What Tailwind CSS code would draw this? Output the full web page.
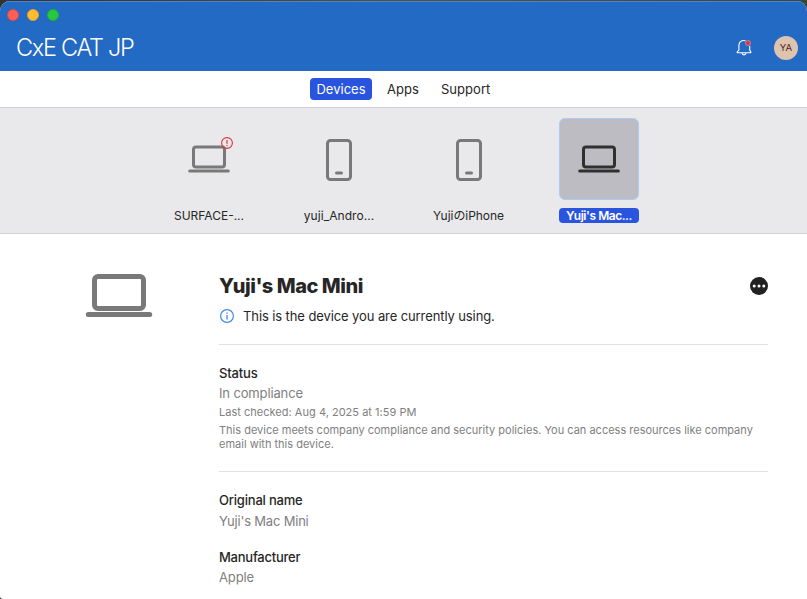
<!DOCTYPE html>
<html lang="en">
<head>
<meta charset="utf-8">
<title>CxE CAT JP</title>
<script src="https://cdn.jsdelivr.net/npm/@tailwindcss/browser@4"></script>
</head>
<body class="h-[599px] w-[807px] overflow-hidden bg-gradient-to-r from-[#34342f] via-[#55513f] to-[#39483f] pt-px font-['Inter','Noto_Sans_CJK_JP',sans-serif] text-[13px] text-[#262626]">
<div class="flex h-[598px] flex-col overflow-hidden rounded-t-[10px] rounded-bl-[3px] bg-white">
  <header class="flex h-[70px] shrink-0 flex-col border-t border-[#4b83cd] bg-[#236ac4]">
    <div class="flex gap-2 pt-[7px] pl-[7px]">
      <span class="size-3 rounded-full border border-[#e2463f] bg-[#ff5f57]"></span>
      <span class="size-3 rounded-full border border-[#e0a02c] bg-[#febc2e]"></span>
      <span class="size-3 rounded-full border border-[#1fae35] bg-[#28c840]"></span>
    </div>
    <div class="mt-[3px] flex h-12 items-center pr-[9px] pl-4">
      <h1 class="flex-1 text-[23.5px] leading-7 font-light tracking-[-1.3px] text-white">CxE CAT JP</h1>
      <svg class="mr-[21px] h-[18px] w-[18px]" viewBox="0 0 18 18" fill="none" stroke="#fff" stroke-width="1.1">
        <path d="M10.5 1.700C6.500 .7 3.900 3 3.900 6.300v4.700L2.200 13q-.3.800.5.800h12.600q.8 0 .5-.8L14.700 11V7"/>
        <path d="M7 14c.3 2.500 3.700 2.500 4 0"/>
        <circle cx="13" cy="4" r="2.500" fill="#e0313a" stroke="#e9a3b3" stroke-width=".6"/>
      </svg>
      <div class="mt-px flex size-6 items-center justify-center rounded-full bg-[#dec3b0] text-[9.5px] font-normal tracking-[0.2px] text-[#4a2a1c]">YA</div>
    </div>
  </header>

  <nav class="flex h-[37px] shrink-0 items-center border-b border-[#d1d1d1] pl-[310px] leading-4 tracking-[0.03px]">
    <a class="flex h-[22px] w-[62px] items-center justify-center rounded-[4px] bg-[#2955de] text-white">Devices</a>
    <a class="ml-[15px] w-[54px]">Apps</a>
    <a>Support</a>
  </nav>

  <section class="flex h-[126px] shrink-0 gap-[50px] border-b border-[#d1d1d1] bg-[#e9e9eb] pt-[10px] pl-[169px] text-[12px] leading-[15px]">
    <div class="flex w-20 flex-col items-center gap-2">
      <div class="relative flex h-[82px] w-20 items-center justify-center">
        <svg class="h-[30px] w-[42px]" viewBox="0 0 42 30" fill="none" stroke="#797979" stroke-width="3" stroke-linecap="round"><rect x="5.500" y="3" width="31" height="20" rx="2.500"/><path d="M1.700 27h38.600"/></svg>
        <svg class="absolute top-[19px] left-[52px] size-3" viewBox="0 0 12 12" fill="none" stroke="#d9333f"><circle cx="6" cy="6" r="5.400" stroke-width="1.100"/><path d="M6 3v3.800M6 8v1.200" stroke-width="1.200"/></svg>
      </div>
      <span class="whitespace-nowrap">SURFACE-...</span>
    </div>
    <div class="flex w-20 flex-col items-center gap-2">
      <div class="flex h-[82px] w-20 items-center justify-center pt-[2px]">
        <svg class="h-[42px] w-[26px]" viewBox="0 0 26 42" fill="none" stroke="#797979" stroke-width="3" stroke-linecap="round"><rect x="1.500" y="1.500" width="23" height="39" rx="3"/><path d="M10.500 34h5"/></svg>
      </div>
      <span class="whitespace-nowrap tracking-[0.05px]">yuji_Andro...</span>
    </div>
    <div class="flex w-20 flex-col items-center gap-2">
      <div class="flex h-[82px] w-20 items-center justify-center pt-[2px]">
        <svg class="h-[42px] w-[26px]" viewBox="0 0 26 42" fill="none" stroke="#797979" stroke-width="3" stroke-linecap="round"><rect x="1.500" y="1.500" width="23" height="39" rx="3"/><path d="M10.500 34h5"/></svg>
      </div>
      <span class="mr-px h-[15px] whitespace-nowrap tracking-[-0.05px]">YujiのiPhone</span>
    </div>
    <div class="flex w-20 flex-col items-center gap-2">
      <div class="flex h-[82px] w-20 items-center justify-center rounded-[6px] border border-[#adcbf7] bg-[#bdbcc2]">
        <svg class="h-[30px] w-[42px] shrink-0" viewBox="0 0 42 30" fill="none" stroke="#303030" stroke-width="3" stroke-linecap="round"><rect x="5.500" y="3" width="31" height="20" rx="2.500"/><path d="M1.700 27h38.600"/></svg>
      </div>
      <span class="h-[15px] w-20 rounded-[4px] bg-[#2955de] text-center font-semibold tracking-[-0.45px] whitespace-nowrap text-white">Yuji's Mac...</span>
    </div>
  </section>

  <main class="flex flex-1 pr-[39px] pl-[85px]">
    <div class="w-[134px] shrink-0 pt-[39px]">
      <svg class="h-[46px] w-[68px]" viewBox="0 0 68 46" fill="none" stroke="#797979" stroke-width="5" stroke-linecap="round"><rect x="9.500" y="3.500" width="49" height="32" rx="3.500"/><path d="M3.300 41.500h61.400"/></svg>
    </div>
    <div class="min-w-0 flex-1">
      <div class="mt-[38px] flex h-7 items-center justify-between">
        <h2 class="text-[20px] leading-7 font-extrabold tracking-[-0.46px]">Yuji's Mac Mini</h2>
        <svg class="size-[18px]" viewBox="0 0 18 18" fill="#fff"><circle cx="9" cy="9" r="9" fill="#222"/><circle cx="4.200" cy="9" r="1.500"/><circle cx="9" cy="9" r="1.500"/><circle cx="13.800" cy="9" r="1.500"/></svg>
      </div>
      <div class="mt-[7px] flex h-[17px] items-center gap-[9px] leading-4">
        <svg class="ml-[1px] size-[14px]" viewBox="0 0 14 14" fill="none" stroke="#4388e8"><circle cx="7" cy="7" r="6.400" stroke-width="1.200"/><path d="M7 6v4.500M7 3.500v1.300" stroke-width="1.300"/></svg>
        <span class="tracking-[-0.1px]">This is the device you are currently using.</span>
      </div>
      <div class="mt-5 border-t border-[#e1e1e1] pt-5 text-[#808080]">
        <h3 class="leading-4 font-medium tracking-[-0.15px] text-[#262626]">Status</h3>
        <p class="mt-1 leading-4 tracking-[-0.14px]">In compliance</p>
        <p class="mt-1 text-[11px] leading-[14px] tracking-[0.02px]">Last checked: Aug 4, 2025 at 1:59 PM</p>
        <p class="mt-1 text-[11px] leading-[14px]">This device meets company compliance and security policies. You can access resources like company<br>email with this device.</p>
      </div>
      <div class="mt-5 border-t border-[#e1e1e1] pt-5 leading-4 tracking-[-0.2px] text-[#808080]">
        <h3 class="font-medium text-[#262626]">Original name</h3>
        <p class="mt-[5px]">Yuji's Mac Mini</p>
        <h3 class="mt-5 font-medium tracking-[-0.25px] text-[#262626]">Manufacturer</h3>
        <p class="mt-1 tracking-[-0.15px]">Apple</p>
      </div>
    </div>
  </main>
</div>
</body>
</html>
